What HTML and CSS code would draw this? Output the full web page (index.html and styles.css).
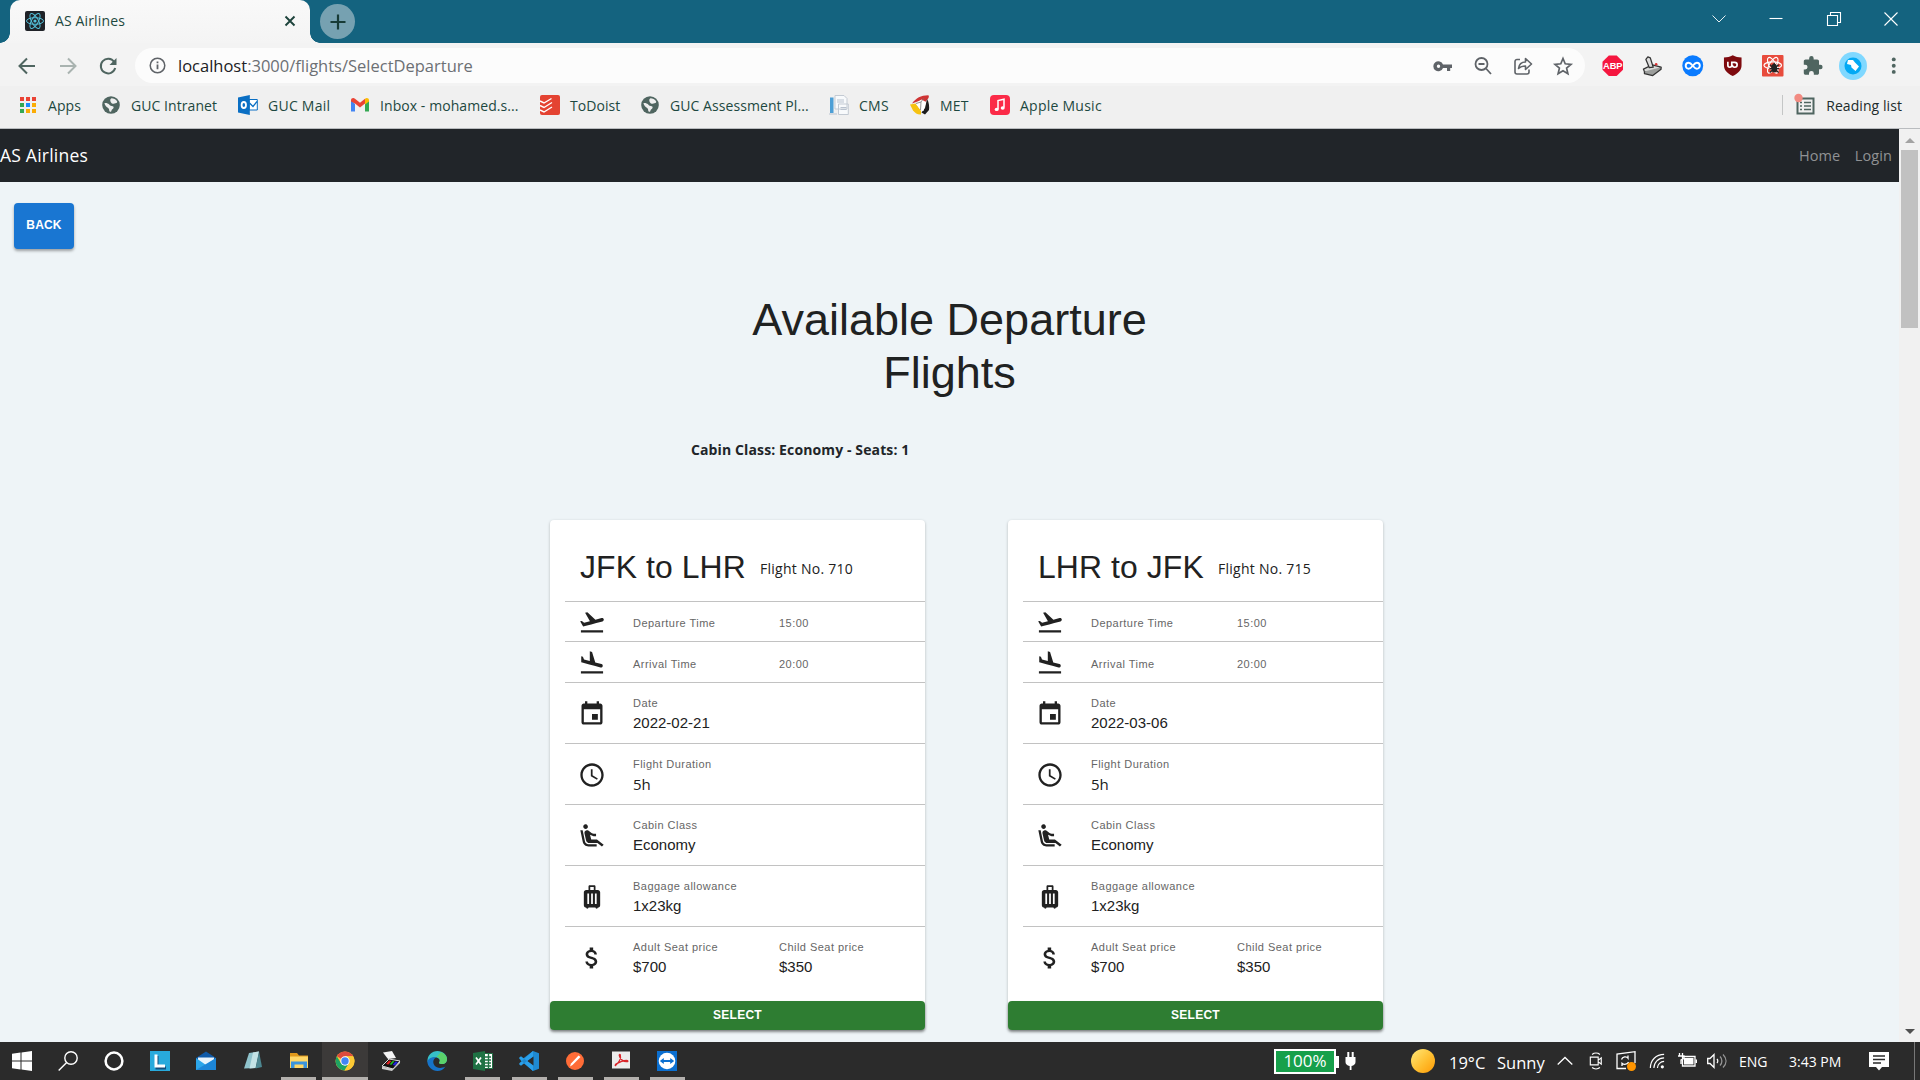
FILE: index.html
```
<!DOCTYPE html>
<html lang="en">
<head>
<meta charset="utf-8">
<title>AS Airlines</title>
<link rel="stylesheet" href="styles.css">
</head>
<body>
<svg width="0" height="0" class="defs">
  <symbol id="i-takeoff" viewBox="0 0 24 24"><path d="M2.5 19h19v2h-19zm19.57-9.36c-.21-.8-1.04-1.28-1.84-1.06L14.92 10l-6.9-6.43-1.93.51 4.14 7.17-4.97 1.33-1.97-1.54-1.45.39 1.82 3.16.77 1.33 1.6-.43 5.31-1.42 4.35-1.16L21 11.49c.81-.23 1.28-1.05 1.07-1.85z"/></symbol>
  <symbol id="i-landing" viewBox="0 0 24 24"><path d="M2.5 19h19v2h-19zm7.18-5.73 4.35 1.16 5.31 1.42c.8.21 1.62-.26 1.84-1.06.21-.8-.26-1.62-1.06-1.84l-5.31-1.42-2.76-9.02L10.12 2v8.28L5.15 8.95l-.93-2.32-1.45-.39v5.17l1.6.43z"/></symbol>
  <symbol id="i-event" viewBox="0 0 24 24"><path d="M17 12h-5v5h5v-5zM16 1v2H8V1H6v2H5c-1.11 0-1.99.9-1.99 2L3 19c0 1.1.89 2 2 2h14c1.1 0 2-.9 2-2V5c0-1.1-.9-2-2-2h-1V1h-2zm3 18H5V8h14v11z"/></symbol>
  <symbol id="i-clock" viewBox="0 0 24 24"><path d="M11.99 2C6.47 2 2 6.48 2 12s4.47 10 9.99 10C17.52 22 22 17.52 22 12S17.52 2 11.99 2zM12 20c-4.42 0-8-3.58-8-8s3.58-8 8-8 8 3.58 8 8-3.58 8-8 8zm.5-13H11v6l5.25 3.15.75-1.23-4.5-2.67z"/></symbol>
  <symbol id="i-seat" viewBox="0 0 24 24"><path d="M5.35 5.64c-.9-.64-1.12-1.88-.49-2.79.63-.9 1.88-1.12 2.79-.49.9.64 1.12 1.88.49 2.79-.64.9-1.88 1.12-2.79.49zM16 19H8.93c-1.48 0-2.74-1.08-2.96-2.54L4 7H2l1.99 9.76C4.37 19.2 6.47 21 8.94 21H16v-2zm.23-4h-4.88l-1.03-4.1c1.58.89 3.28 1.54 5.15 1.22V9.99c-1.63.31-3.44-.27-4.69-1.25L9.14 7.47c-.23-.18-.49-.3-.76-.38-.32-.09-.66-.12-.99-.06h-.02c-1.23.22-2.05 1.39-1.84 2.61l1.35 5.92C7.16 16.98 8.39 18 9.83 18h6.85l3.82 3 1.5-1.5-5.77-4.5z"/></symbol>
  <symbol id="i-bag" viewBox="0 0 24 24"><path d="M17 6h-2V3c0-.55-.45-1-1-1h-4c-.55 0-1 .45-1 1v3H7c-1.100 0-2 .9-2 2v11c0 1.100.9 2 2 2 0 .55.45 1 1 1s1-.45 1-1h6c0 .55.45 1 1 1s1-.45 1-1c1.100 0 2-.9 2-2V8c0-1.100-.9-2-2-2zM9.500 18H8V9h1.500v9zm3.250 0h-1.500V9h1.500v9zm.750-12h-3V3.500h3V6zM16 18h-1.500V9H16v9z"/></symbol>
  <symbol id="i-dollar" viewBox="0 0 24 24"><path d="M11.800 10.900c-2.270-.590-3-1.200-3-2.150 0-1.090 1.010-1.850 2.700-1.850 1.780 0 2.440.850 2.500 2.100h2.210c-.070-1.720-1.120-3.300-3.210-3.810V3h-3v2.160c-1.940.420-3.500 1.680-3.500 3.610 0 2.310 1.910 3.460 4.700 4.130 2.500.6 3 1.480 3 2.410 0 .690-.490 1.790-2.700 1.790-2.060 0-2.870-.920-2.980-2.100h-2.200c.120 2.190 1.760 3.420 3.680 3.830V21h3v-2.150c1.950-.370 3.500-1.500 3.500-3.550 0-2.840-2.430-3.810-4.700-4.400z"/></symbol>
  <symbol id="i-globe" viewBox="0 0 18 18"><circle cx="9" cy="9" r="8.800" fill="#4f6560"/><path d="M2.500 7c2-.3 3.500.3 4.500 1.300s1.300 1.600 2.700 1.700 2.300.8 1.800 2-1.800 1.500-2 2.500-.5 1.500-1.500 1.200-.8-1.700-1-2.700S2.800 10.500 2.500 7z M9.500 2.200c2 0 4.500 1 5.700 3.300.3 1.500-1.500 1.700-2.700 1.900S10 8 9.200 6.800 7.500 3 9.500 2.200z" fill="#efefef"/></symbol>
</svg>

<header class="tabstrip">
  <div class="tab">
    <svg class="favicon" viewBox="0 0 20 20"><rect width="20" height="20" rx="2" fill="#1f2227"/><g fill="none" stroke="#53bfd8" stroke-width="1"><ellipse cx="10" cy="10" rx="8.500" ry="3.300"/><ellipse cx="10" cy="10" rx="8.500" ry="3.300" transform="rotate(60 10 10)"/><ellipse cx="10" cy="10" rx="8.500" ry="3.300" transform="rotate(120 10 10)"/></g><circle cx="10" cy="10" r="1.600" fill="#53bfd8"/></svg>
    <span class="tab-title">AS Airlines</span>
    <svg class="tab-close" viewBox="0 0 12 12"><path d="M1.500 1.500l9 9M10.500 1.500l-9 9" stroke="#1d433b" stroke-width="1.900"/></svg>
  </div>
  <div class="newtab"><svg viewBox="0 0 16 16" width="16" height="16"><path d="M8 .5v15M.5 8h15" stroke="#173b36" stroke-width="2.200"/></svg></div>
  <div class="winctl">
    <svg viewBox="0 0 14 14"><path d="M.500 3.500l6.500 6.500 6.500-6.500" stroke-width=".9"/></svg>
    <svg viewBox="0 0 14 14"><path d="M.5 6.500h13"/></svg>
    <svg viewBox="0 0 14 14"><path d="M.5 3.500h10v10h-10zM3.500 3.500v-3h10v10h-3"/></svg>
    <svg viewBox="0 0 14 14"><path d="M.5.5l13 13M13.500.5l-13 13"/></svg>
  </div>
</header>

<div class="toolbar">
  <div class="navbtns">
    <svg viewBox="0 0 18 18" class="nb"><path d="M17 9H2M9 1.500L1.500 9 9 16.500"/></svg>
    <svg viewBox="0 0 18 18" class="nb dim"><path d="M1 9h15M9 1.500L16.500 9 9 16.500"/></svg>
    <svg viewBox="0 0 18 18" class="nb"><path d="M15.200 5A7.300 7.300 0 1 0 16.200 11"/><path d="M17.500 1v7h-7z" class="solid"/></svg>
  </div>
  <div class="omnibox">
    <svg viewBox="0 0 18 18" class="info"><circle cx="9" cy="9" r="7.700" fill="none" stroke="#5f6368" stroke-width="1.600"/><path d="M9 8v5M9 4.800v1.800" stroke="#5f6368" stroke-width="1.900"/></svg>
    <span class="url">localhost<span class="path">:3000/flights/SelectDeparture</span></span>
    <div class="omni-icons">
      <svg viewBox="0 0 20 20"><path fill="#5f6368" fill-rule="evenodd" d="M10 8.500A5 5 0 1 0 10 12h4v3h3.200v-3H19V8.500zM5.500 8.500a1.700 1.700 0 1 1 0 3.400 1.700 1.700 0 0 1 0-3.400z"/></svg>
      <svg viewBox="0 0 20 20" fill="none" stroke="#5f6368" stroke-width="1.800"><circle cx="8.500" cy="8" r="6"/><path d="M13 12.500l5 5.500M5.500 8h6"/></svg>
      <svg viewBox="0 0 20 20" fill="none" stroke="#5f6368" stroke-width="1.600"><path d="M7 3.500H4a2 2 0 0 0-2 2V16a2 2 0 0 0 2 2h10a2 2 0 0 0 2-2v-2.500"/><path d="M5.500 12.500c.5-4 3-6.500 7-6.500V2.500L18.500 8l-6 5.500V10c-3 0-5 .5-7 2.500z" stroke-linejoin="round"/></svg>
      <svg viewBox="0 0 20 20" fill="none" stroke="#5f6368" stroke-width="1.700"><path d="M10 2.500l2.200 5.300 5.800.5-4.400 3.800 1.300 5.600-4.900-3-4.900 3 1.300-5.600L2 8.300l5.800-.5z"/></svg>
    </div>
  </div>
  <div class="exts">
    <svg viewBox="0 0 22 22"><path d="M7 .5h8L21.500 7v8L15 21.500H7L.5 15V7z" fill="#f5163f"/><text x="11" y="14.700" class="abp">ABP</text></svg>
    <svg viewBox="0 0 22 22" stroke="#333" stroke-linejoin="round" stroke-width="1.300"><path d="M1.500 14.500l9-4.500 9 2.500-8.500 6.500-8.500-2z" fill="#d9dad8"/><path d="M2.500 17v2l8.500 2 8.500-6.500v-2" fill="#9b9d9b"/><path d="M7.500 13L4 4.500 6 2l2.500 1 3 9.500z" fill="#ddd"/><circle cx="14.500" cy="9.500" r="1.300" fill="#d33" stroke="none"/></svg>
    <svg viewBox="0 0 22 22"><circle cx="11" cy="11" r="10.700" fill="#0a7bff"/><path d="M11 11c-2-2.500-3-3-4.200-3a3 3 0 0 0 0 6c1.200 0 2.200-.5 4.200-3s3-3 4.200-3a3 3 0 0 1 0 6c-1.200 0-2.200-.5-4.200-3z" fill="none" stroke="#fff" stroke-width="2"/></svg>
    <svg viewBox="0 0 22 22"><path d="M11 .3c3 1.700 5.500 2.200 9 2.200v8c0 5-3 8-9 11-6-3-9-6-9-11v-8c3.500 0 6-.5 9-2.200z" fill="#7e0a0e"/><path d="M6 7v3.500a2 2 0 0 0 4 0V7.500h3a2.500 2.500 0 0 1 0 5c-2 0-2.500-1-2.500-2.500" fill="none" stroke="#fff" stroke-width="1.700"/></svg>
    <svg viewBox="0 0 22 22"><rect width="22" height="22" rx="1" fill="#e84b3c"/><g fill="none" stroke="#fff" stroke-width="1.200"><ellipse cx="11" cy="10.500" rx="9" ry="3.500"/><ellipse cx="11" cy="10.500" rx="9" ry="3.500" transform="rotate(60 11 10.500)"/><ellipse cx="11" cy="10.500" rx="9" ry="3.500" transform="rotate(120 11 10.500)"/></g><ellipse cx="12.500" cy="13.500" rx="3" ry="4.500" fill="#222"/><path d="M8 10l9 8M17 10l-9 8M7.500 14h10M12.500 8v3" stroke="#222" stroke-width="1.300"/></svg>
    <svg viewBox="0 0 24 24"><path fill="#4f6560" d="M20.500 11H19V7c0-1.100-.9-2-2-2h-4V3.500a2.500 2.500 0 0 0-5 0V5H4c-1.100 0-2 .9-2 2v3.800h1.500a2.700 2.700 0 0 1 0 5.400H2V20c0 1.100.9 2 2 2h3.800v-1.500a2.700 2.700 0 0 1 5.400 0V22H17c1.100 0 2-.9 2-2v-4h1.500a2.500 2.500 0 0 0 0-5z"/></svg>
    <svg viewBox="0 0 28 28" class="avatar"><circle cx="14" cy="14" r="14" fill="#80d8ff"/><circle cx="14" cy="14" r="8.500" fill="#03a9f4"/><path d="M9 8h5l2 2.500 4 4-3.500 4.500-4-3.500-.5-2.500-4-1z" fill="#fff"/></svg>
    <svg viewBox="0 0 22 22"><g fill="#4f6560"><circle cx="11" cy="4.500" r="2"/><circle cx="11" cy="11" r="2"/><circle cx="11" cy="17.300" r="2"/></g></svg>
  </div>
</div>

<nav class="bookmarks">
  <a><svg viewBox="0 0 20 20"><g fill="#ea4335"><path d="M2 2h4v4H2zM8 2h4v4H8zM14 2h4v4h-4z"/></g><path d="M2 8h4v4H2zM2 14h4v4H2z" fill="#34a853"/><path d="M8 8h4v4H8z" fill="#1a8cff"/><path d="M14 8h4v4h-4zM8 14h4v4H8zM14 14h4v4h-4z" fill="#fbac05"/></svg><span>Apps</span></a>
  <a><svg viewBox="-1 -1 20 20"><use href="#i-globe" width="18" height="18"/></svg><span>GUC Intranet</span></a>
  <a><svg viewBox="0 0 20 20"><path d="M11 4.500h8.300v10.500H11z" fill="#fff" stroke="#0a6fc4"/><path d="M11.500 8l3.500 3.500 4-5" fill="none" stroke="#0a6fc4" stroke-width="1.300"/><path d="M0 2.500L11.800 0v20L0 17.500z" fill="#0a6fc4"/><ellipse cx="5.800" cy="10" rx="2.200" ry="3" fill="none" stroke="#fff" stroke-width="1.800"/></svg><span class="wide">GUC Mail</span></a>
  <a><svg viewBox="0 0 20 20"><path d="M1 5v11.500h4V9z" fill="#4285f4"/><path d="M19 5v11.500h-4V9z" fill="#34a853"/><path d="M1 5.500C1 3 3.500 2.500 5 3.800l5 4 5-4v4.800l-5 4-5-4L1 6.500z" fill="#ea4335"/><path d="M15 3.800c1.500-1.300 4-.8 4 1.700v1l-4 3z" fill="#fbbc04"/></svg><span>Inbox - mohamed.s...</span></a>
  <a><svg viewBox="0 0 20 20"><rect width="20" height="20" rx="2" fill="#e44332"/><path d="M0 6l4 2 7.500-4.500M0 10.500l4 2 8-5M0 15l4 2 8-5" fill="none" stroke="#fff" stroke-width="1.400"/></svg><span>ToDoist</span></a>
  <a><svg viewBox="-1 -1 20 20"><use href="#i-globe" width="18" height="18"/></svg><span>GUC Assessment Pl...</span></a>
  <a><svg viewBox="0 0 20 20"><path d="M1 2.500h3.500V18H1z" fill="#4d9fd6"/><path d="M6 .5h9l3 3V14H6zM9.500 9h9.800v10.500H9.500z" fill="#f8fafc" stroke="#c3cad3"/><path d="M11.500 12.500h6M11.500 14.500h6M8 5h7M8 7h7M0 19h8" stroke="#b9c2cf"/></svg><span class="wide">CMS</span></a>
  <a><svg viewBox="0 0 20 20"><path d="M2 8.500C6 3 11 .5 18 .3c1.200 0 1 1.500.5 2.700L14.500 8l-3-3z" fill="#cf3434"/><path d="M0 9.500l6-1 5 7.500v3.500c-3 .5-6-1.500-8-4z" fill="#f6c211"/><path d="M17 4c2 3 2.500 8 2 11l-4 4.500-3.500-2L15 13z" fill="#1c1c1c"/><path d="M5.500 8.500l6-4 4.500 2.500-2.500 9-3-1z" fill="#fff"/><path d="M6 8.500l5-1.500 2.500-3.500M11 7l-.5 8" fill="none" stroke="#777" stroke-width=".8"/></svg><span class="wide">MET</span></a>
  <a><svg viewBox="0 0 20 20"><rect width="20" height="20" rx="4" fill="#fb2b48"/><path d="M8 14V5.500l6-1.300V12.500" fill="none" stroke="#fff" stroke-width="1.500"/><ellipse cx="6.700" cy="14.400" rx="2" ry="1.700" fill="#fff"/><ellipse cx="12.700" cy="13" rx="2" ry="1.700" fill="#fff"/></svg><span class="wide">Apple Music</span></a>
  <div class="reading"><svg viewBox="0 0 22 22"><path d="M3.500 4.500h16v15h-16z" fill="none" stroke="#4f6560" stroke-width="2"/><path d="M6 8.500h2M10 8.500h7M6 12h2M10 12h7M6 15.500h2M10 15.500h7" stroke="#4f6560" stroke-width="1.500"/><circle cx="4.500" cy="4" r="4.200" fill="#f28b82"/></svg><span>Reading list</span></div>
</nav>

<main class="viewport">
  <div class="page">
    <div class="appbar"><span class="brand">AS Airlines</span><span class="links"><a>Home</a><a>Login</a></span></div>
    <button class="back">BACK</button>
    <h1>Available Departure<br>Flights</h1>
    <p class="summary">Cabin Class: Economy - Seats: 1</p>
    <div class="cards">
      <article class="card">
        <div class="head"><h2>JFK to LHR</h2><span class="ui">Flight No. 710</span></div>
        <div class="row r1"><svg><use href="#i-takeoff"/></svg><span class="lbl">Departure Time</span><span class="lbl">15:00</span></div>
        <div class="row r2"><svg><use href="#i-landing"/></svg><span class="lbl">Arrival Time</span><span class="lbl">20:00</span></div>
        <div class="row r3"><svg><use href="#i-event"/></svg><div><span class="lbl">Date</span><span class="val">2022-02-21</span></div></div>
        <div class="row r3"><svg><use href="#i-clock"/></svg><div><span class="lbl">Flight Duration</span><span class="val ui">5h</span></div></div>
        <div class="row r3"><svg><use href="#i-seat"/></svg><div><span class="lbl">Cabin Class</span><span class="val">Economy</span></div></div>
        <div class="row r3"><svg><use href="#i-bag"/></svg><div><span class="lbl">Baggage allowance</span><span class="val">1x23kg</span></div></div>
        <div class="row r4"><svg><use href="#i-dollar"/></svg><div><span class="lbl">Adult Seat price</span><span class="val">$700</span></div><div><span class="lbl">Child Seat price</span><span class="val">$350</span></div></div>
        <button class="select">SELECT</button>
      </article>
      <article class="card">
        <div class="head"><h2>LHR to JFK</h2><span class="ui">Flight No. 715</span></div>
        <div class="row r1"><svg><use href="#i-takeoff"/></svg><span class="lbl">Departure Time</span><span class="lbl">15:00</span></div>
        <div class="row r2"><svg><use href="#i-landing"/></svg><span class="lbl">Arrival Time</span><span class="lbl">20:00</span></div>
        <div class="row r3"><svg><use href="#i-event"/></svg><div><span class="lbl">Date</span><span class="val">2022-03-06</span></div></div>
        <div class="row r3"><svg><use href="#i-clock"/></svg><div><span class="lbl">Flight Duration</span><span class="val ui">5h</span></div></div>
        <div class="row r3"><svg><use href="#i-seat"/></svg><div><span class="lbl">Cabin Class</span><span class="val">Economy</span></div></div>
        <div class="row r3"><svg><use href="#i-bag"/></svg><div><span class="lbl">Baggage allowance</span><span class="val">1x23kg</span></div></div>
        <div class="row r4"><svg><use href="#i-dollar"/></svg><div><span class="lbl">Adult Seat price</span><span class="val">$700</span></div><div><span class="lbl">Child Seat price</span><span class="val">$350</span></div></div>
        <button class="select">SELECT</button>
      </article>
    </div>
  </div>
  <div class="scrollbar">
    <svg viewBox="0 0 20 21"><path d="M5 14l5-5 5 5z" fill="#a3a3a3"/></svg>
    <div class="thumb"></div>
    <svg viewBox="0 0 20 21" class="down"><path d="M5 8l5 5 5-5z" fill="#505050"/></svg>
  </div>
</main>

<footer class="taskbar">
  <div class="apps">
    <span><svg viewBox="0 0 20 20"><path d="M0 2.800L8.500 1.600v7.900H0zM9.500 1.500L20 0v9.500H9.500zM0 10.500h8.500v7.900L0 17.200zM9.500 10.500H20V20L9.500 18.500z" fill="#fff"/></svg></span>
    <span><svg viewBox="0 0 20 20" fill="none" stroke="#fff" stroke-width="1.400"><circle cx="13" cy="7" r="6.200"/><path d="M8.700 11.500L.7 19.500"/></svg></span>
    <span><svg viewBox="0 0 20 20"><circle cx="10" cy="10" r="8.400" fill="none" stroke="#fff" stroke-width="2.500"/></svg></span>
    <span><svg viewBox="0 0 20 20"><path d="M0 0h20v20H0z" fill="#28aadc"/><path d="M6 4v12h9" fill="none" stroke="#134e7c" stroke-width="3" transform="translate(1 1)"/><path d="M6 3.500v11.500h9" fill="none" stroke="#fff" stroke-width="3"/></svg></span>
    <span><svg viewBox="0 0 20 20"><path d="M0 7l10-6.500L20 7v4H0z" fill="#0f5aa8"/><path d="M2 6.500h16v8H2z" fill="#e9f4fc"/><path d="M0 7l10 7 10-7v12H0z" fill="#2ca6ea"/><path d="M0 19L20 7v12z" fill="#1c86d8"/></svg></span>
    <span><svg viewBox="0 0 20 20"><path d="M6 2l10-1.500L12.500 17 1 17.500z" fill="#8fc3cc"/><path d="M10 1.500l6-1L12.500 17l-6 .4z" fill="#c4e3e6"/><path d="M16 .5l3 15.500-6.500 1.500z" fill="#4d8791"/></svg></span>
    <span class="on"><svg viewBox="0 0 20 20"><path d="M1 2h7l2 2.500h9V8H1z" fill="#e0981a"/><path d="M1 5.500h18V17H1z" fill="#ffd767"/><path d="M2 17v-6.500h16V17h-3.500v-3.500h-9V17z" fill="#3a94dd"/></svg></span>
    <span class="on cur"><svg viewBox="0 0 20 20"><circle cx="10" cy="10" r="9.500" fill="#fcc934"/><path d="M10 10L1.800 5.300A9.500 9.500 0 0 1 18.200 5.300H10z" fill="#dd4b3e"/><path d="M1.800 5.300A9.500 9.500 0 0 0 9.500 19.500L14.200 12 10 10 6 12.300z" fill="#1ea362"/><path d="M10 5.300h8.200A9.500 9.500 0 0 1 9.500 19.500L14.200 12z" fill="#fcc934"/><circle cx="10" cy="10" r="4.700" fill="#fff"/><circle cx="10" cy="10" r="3.700" fill="#4285f4"/></svg></span>
    <span><svg viewBox="0 0 20 20"><path d="M2 1.500l9-1.500 4 7-8 1z" fill="#f4f4f4"/><path d="M1 15l7-7 11 2-7 8z" fill="#111" stroke="#ddd"/><path d="M5 13l3-3.500 2.500.5-3 3.500z" fill="#d22"/><path d="M8.500 13.500l3-3.500 2 .3-3 3.500z" fill="#2b2"/><path d="M11.500 14l3-3.500 2.500.5-3 3.500z" fill="#22d"/><path d="M1 15.500v2.500l10 2 8-8v-2l-7 8z" fill="#ccc"/></svg></span>
    <span><svg viewBox="0 0 20 20"><path d="M.5 11C0 4 5 0 10.500 0 16 0 20 4 20 8c0 3-2 5-5 5-2.500 0-3.500-1-2.500-2 1-2-.5-4.500-4-4.500-4 0-7 2-8 4.500z" fill="#36c0c8"/><path d="M14 1c4 1.500 6 4.500 6 7 0 3-2 5-5 5-2.500 0-3.500-1-2.500-2 1.500-3-1-5-3-5z" fill="#5bd26a"/><path d="M.3 10C2 6.500 6 5.500 9 6.500c-3 1.500-3.500 5-1.500 8 2 2.500 6.500 3.500 11 1C16.500 18.500 13.500 20 10.500 20 5 20 .3 15.500.3 10z" fill="#1673c9"/></svg></span>
    <span class="on"><svg viewBox="0 0 20 20"><path d="M11 2.500h8.500v15H11z" fill="#fff" stroke="#1f7244"/><path d="M12 6h6M12 9h6M12 12h6M12 15h6M15.500 3v14" stroke="#1f7244" stroke-width="1.400"/><path d="M0 2l12-2v20L0 18z" fill="#1f7244"/><path d="M3 6.500l5 7M8 6.500l-5 7" stroke="#fff" stroke-width="1.700"/></svg></span>
    <span class="on"><svg viewBox="0 0 20 20"><path d="M14 0l6 2.200v15.600L14 20 1.500 9.500z" fill="#1f8ad2"/><path d="M14.500 5.500v9L8 10z" fill="#2b2b2b"/><path d="M.3 6.500L2 5.200l12 9.300V20L.3 7.800zM.3 13.500L2 14.800 14 5.500V0L.3 12.200z" fill="#2aa0ea"/></svg></span>
    <span class="on"><svg viewBox="0 0 20 20"><circle cx="10" cy="10" r="9" fill="#ff6c37"/><path d="M5 15.500l1-3L13.500 4.500l2 1.500-8 8z" fill="#fff"/></svg></span>
    <span class="on"><svg viewBox="0 0 20 20"><path d="M1 .5h18v17H1z" fill="#ececec"/><path d="M4.500 14.500C8 11.500 10 7 9.300 4c-.3-1-1.300-.5-1 .5.700 3.500 4 6.500 7.700 6.200 1.500-.2 1-1.200-.5-1.200-3.500 0-7 1.500-10.500 3.500-1 1-.8 2-.5 1.500z" fill="none" stroke="#d9252a" stroke-width="1.300"/></svg></span>
    <span class="on"><svg viewBox="0 0 20 20"><path d="M0 0h20v20H0z" fill="#0b6fd0"/><circle cx="10" cy="10" r="8.300" fill="#fff"/><path d="M2.800 10l4-3v2h6.400V7l4 3-4 3v-2H6.800v2z" fill="#0b6fd0"/></svg></span>
  </div>
  <div class="tray">
    <div class="batt"><span>100%</span></div>
    <svg class="plug" viewBox="0 0 11 20"><path d="M2.300 1h2v5h2.400V1h2v5H10.500v5c0 2-1.500 3.500-4 4v4H4.700v-4C2 14.500.5 13 .5 11V6h1.800z" fill="#fff"/></svg>
    <div class="sun"></div>
    <span class="temp">19°C</span><span class="sunny">Sunny</span>
    <svg class="t-up" viewBox="0 0 16 16"><path d="M.7 11.500L8 4.500l7.300 7"/></svg>
    <svg class="t-cam" viewBox="0 0 16 20"><path d="M3.500 2.500C6 .5 10 .5 12.500 2.500M3.500 17.500c2.500 2 6.500 2 9 0M1.500 5.500h9v9h-9zM10.500 9l3.500-2.500v7L10.500 11"/></svg>
    <svg class="t-upd" viewBox="0 0 20 20"><path d="M10 17.500H1V3L19 .7V12"/><path d="M5.500 8.500c1-3 5-3.500 6.500-1.300V4.500M12.500 11c-1 2.500-4.500 3-6.500 1.300v2.700"/><circle cx="15.500" cy="15.500" r="4.500" fill="#ff9500" stroke="none"/></svg>
    <svg class="t-wifi" viewBox="0 0 18 18"><path d="M1.500 17C1.500 8 8 1.500 17 1.500M5.500 17C5.500 10.500 10.500 5.500 17 5.500M9.500 17c0-4 3.500-7.500 7.500-7.500"/><circle cx="15" cy="15.500" r="1.800" fill="#fff" stroke="none"/></svg>
    <svg class="t-bat" viewBox="0 0 20 16"><path d="M5.500 3.500h12.500v9.500H5.500zM2.500 0v3M5.500 0v3M1 3h6v2.500L4 7v4"/><path d="M7 5h9.500v6.500H7zM18.500 6.500h1.500v3.500h-1.500z" fill="#fff" stroke="none"/></svg>
    <svg class="t-vol" viewBox="0 0 20 16"><path d="M.7 5.500H3L7 1.500v13l-4-4H.7zM10 6c1 1 1 3 0 4"/><path d="M13 3.500c2.500 2.500 2.500 6.500 0 9M16 1.500c4 4 4 9 0 13" opacity=".5"/></svg>
    <span class="eng">ENG</span><span class="clock">3:43 PM</span>
    <svg class="t-act" viewBox="0 0 20 20"><path d="M0 1h20v15h-7l-3 3.500L7 16H0z" fill="#fff" stroke="none"/><path d="M4 5h12M4 8.500h12M4 12h8" stroke="#2b2b2b" stroke-width="1.300"/></svg>
    <div class="desk"></div>
  </div>
</footer>
</body>
</html>
```
FILE: styles.css
```
* { box-sizing: border-box; }
body { margin: 0; width: 1920px; height: 1080px; overflow: hidden; display: flex; flex-direction: column; font-family: "Open Sans", "Noto Sans", sans-serif; background: #eef4f7; }
svg { display: block; flex: none; overflow: visible; }
.defs { position: absolute; }
button { border: 0; font-family: "Liberation Sans", Arial, sans-serif; }

.tabstrip { flex: none; height: 43px; background: #14637f; display: flex; padding-left: 10px; }
.tab { width: 300px; height: 43px; background: linear-gradient(#f9f9f9, #f4f4f4); border-radius: 10px 10px 0 0; display: flex; align-items: center; padding: 0 14px 2px 15px; position: relative; }
.tab::before, .tab::after { content: ""; position: absolute; bottom: 0; width: 10px; height: 10px; }
.tab::before { left: -10px; background: radial-gradient(circle at 0 0, transparent 9.5px, #f4f4f4 10px); }
.tab::after { right: -10px; background: radial-gradient(circle at 100% 0, transparent 9.5px, #f4f4f4 10px); }
.favicon { width: 20px; height: 20px; }
.tab-title { margin-left: 10px; font-size: 14px; letter-spacing: .14px; color: #1d4840; flex: 1; }
.tab-close { width: 12px; height: 12px; }
.newtab { width: 35px; height: 35px; margin: 4px 0 0 10px; border-radius: 50%; background: #76a1b1; display: flex; align-items: center; justify-content: center; }
.winctl { margin-left: auto; display: flex; gap: 43.3px; padding: 12px 22px 0 0; }
.winctl svg { width: 14px; height: 14px; fill: none; stroke: #fff; stroke-width: 1.1; }

.toolbar { flex: none; height: 43px; background: #f3f3f3; display: flex; align-items: center; padding: 2px 17px 0 18px; }
.navbtns { display: flex; gap: 22.5px; width: 117px; flex: none; }
.nb { width: 18px; height: 18px; fill: none; stroke: #4f6560; stroke-width: 2; }
.nb .solid { fill: #4f6560; stroke: none; }
.dim { opacity: .45; }
.omnibox { width: 1450px; flex: none; height: 35px; border-radius: 18px; background: #fcfcfc; display: flex; align-items: center; padding-left: 14px; }
.info { width: 17px; height: 17px; }
.url { margin-left: 12px; font-size: 16.5px; color: #202124; flex: 1; }
.path { color: #6c7074; }
.omni-icons { display: flex; gap: 20px; padding-right: 12px; }
.omni-icons svg { width: 20px; height: 20px; }
.exts { display: flex; align-items: center; gap: 18.5px; margin-left: 17px; }
.exts svg { width: 21.500px; height: 21.500px; }
.exts .avatar { width: 28px; height: 28px; margin: 0 -3px; }
.abp { font: bold 9.5px "Liberation Sans", Arial, sans-serif; fill: #fff; text-anchor: middle; }

.bookmarks { flex: none; height: 43px; background: #f0f0f0; border-bottom: 1px solid #b9bcbf; display: grid; grid-template-columns: 83px 137px 112px 190px 100px 189px 81px 80px 1fr auto; padding: 0 18px 4px; align-items: center; font-size: 14px; letter-spacing: .07px; color: #1d4840; }
.bookmarks a { display: flex; align-items: center; gap: 10px; height: 38px; white-space: nowrap; }
.bookmarks a svg { width: 20px; height: 20px; }
.wide { letter-spacing: .25px; }
.reading { display: flex; align-items: center; color: #202b2b; border-left: 1px solid #c4c6c6; height: 20px; padding-left: 11px; gap: 10px; white-space: nowrap; }
.reading svg { width: 22px; height: 22px; }

.viewport { flex: none; height: 913px; display: flex; }
.page { width: 1899px; height: 913px; overflow: hidden; display: flex; flex-direction: column; align-items: flex-start; }
.appbar { width: 100%; height: 53px; background: #212529; display: flex; justify-content: space-between; align-items: center; flex: none; padding: 0 7px 1px 0; }
.brand { color: #fff; font-size: 17.5px; letter-spacing: .22px; }
.links { display: flex; gap: 14.5px; font-size: 14.5px; color: #909294; letter-spacing: .1px; }
.back { margin: 21px 0 0 14px; width: 60px; height: 46px; border-radius: 4px; background: #1976d2; color: #fff; font-size: 12px; font-weight: bold; letter-spacing: .15px; padding: 0 0 3px; box-shadow: 0 2px 3px rgba(0,0,0,.35); flex: none; }
h1 { margin: 44px 0 0; width: 100%; text-align: center; font: 45px/53px "Liberation Sans", Arial, sans-serif; color: #1f2222; }
.summary { margin: 41px 0 0 691px; font-size: 14px; letter-spacing: .12px; line-height: 20px; font-weight: 700; color: #212529; }
.cards { display: flex; gap: 83px; margin: 60px 0 0 550px; }
.card { width: 375px; height: 510px; background: #fff; border-radius: 4px; box-shadow: 0 1px 3px rgba(0,0,0,.25); padding-left: 15px; color: #212121; }
.head { height: 82px; border-bottom: 1px solid #c2c2c2; padding: 28px 0 0 15px; display: flex; }
h2 { margin: 0; font: 31.900px/38px "Liberation Sans", Arial, sans-serif; width: 180px; letter-spacing: .1px; }
.ui { font-family: "Open Sans", "Noto Sans", sans-serif; }
.head .ui { font-size: 14px; letter-spacing: .26px; line-height: 20px; padding-top: 11px; }
.row { display: grid; grid-template-columns: 56px 146px 1fr; padding-left: 12px; border-bottom: 1px solid #c2c2c2; font-family: "Liberation Sans", Arial, sans-serif; }
.row svg { width: 28px; height: 28px; margin-left: .5px; fill: #212121; }
.lbl { display: block; font-size: 11px; line-height: 14px; color: #666; letter-spacing: .47px; }
.val { display: block; font-size: 15px; line-height: 20px; }
.r1 { height: 40px; padding-top: 6px; }
.r1 .lbl { margin-top: 8px; }
.r2 { height: 41px; padding-top: 7px; }
.r2 .lbl { margin-top: 8px; }
.r3 { height: 61px; padding-top: 13px; }
.r3 svg { margin-top: 4px; }
.r3 .val { margin-top: 3px; }
.r4 { height: 74px; border: 0; padding-top: 13px; }
.r4 svg { margin-top: 4px; }
.r4 .val { margin-top: 3px; }
.select { display: block; margin-left: -15px; width: 375px; height: 29px; background: #2e7d32; color: #fff; border-radius: 4px; font-size: 12px; font-weight: bold; letter-spacing: .25px; padding: 0 0 2px; box-shadow: 0 2px 3px rgba(0,0,0,.35); }
.scrollbar { width: 21px; background: #f1f1f1; display: flex; flex-direction: column; align-items: center; }
.scrollbar svg { width: 20px; height: 21px; }
.thumb { width: 17px; height: 178px; background: #c1c1c1; }
.down { margin-top: auto; }

.taskbar { flex: none; height: 38px; background: #2b2b2b; display: flex; justify-content: space-between; }
.apps { display: grid; grid-auto-flow: column; grid-auto-columns: 46.1px; margin-left: -1px; }
.apps span { display: flex; justify-content: center; padding: 9px 0 0; height: 38px; }
.apps svg { width: 20px; height: 20px; }
.apps .on { background: linear-gradient(#b3b0ad, #b3b0ad) center bottom / 35px 3px no-repeat; }
.apps .cur { background: linear-gradient(#b3b0ad, #b3b0ad) center bottom / 46px 3px no-repeat #3c3a39; }
.tray { display: flex; align-items: center; width: 646px; color: #fff; }
.tray svg { fill: none; stroke: #fff; stroke-width: 1.3; }
.batt { width: 62px; height: 25px; border: 2px solid #fff; background: #17a04b; position: relative; text-align: center; font-size: 17px; line-height: 20px; }
.batt::after { content: ""; position: absolute; left: 60px; top: 5px; width: 3px; height: 12px; background: #fff; }
.plug { width: 11px; height: 20px; margin-left: 9px; }
.plug path { stroke: none; }
.sun { width: 24px; height: 24px; border-radius: 50%; margin-left: 55px; background: linear-gradient(135deg, #ffe97a, #ffbf30 55%, #ff9a05); }
.temp { font-size: 16.5px; margin-left: 14px; width: 48px; padding-top: 2px; }
.sunny { font-size: 16.5px; width: 60px; padding-top: 2px; }
.t-up { width: 16px; margin-right: 16px; }
.t-cam { width: 14px; height: 20px; margin-right: 13px; }
.t-upd { width: 20px; height: 20px; margin-right: 13px; }
.t-wifi { width: 16px; height: 16px; margin-right: 12px; }
.t-bat { width: 20px; height: 16px; margin-right: 10px; }
.t-vol { width: 20px; height: 16px; margin-right: 12px; }
.eng { font-size: 14px; width: 50px; }
.clock { font-size: 14px; width: 80px; white-space: nowrap; }
.t-act { width: 20px; height: 20px; }
.desk { margin-left: auto; width: 6px; height: 38px; border-left: 1px solid #777; }
```
